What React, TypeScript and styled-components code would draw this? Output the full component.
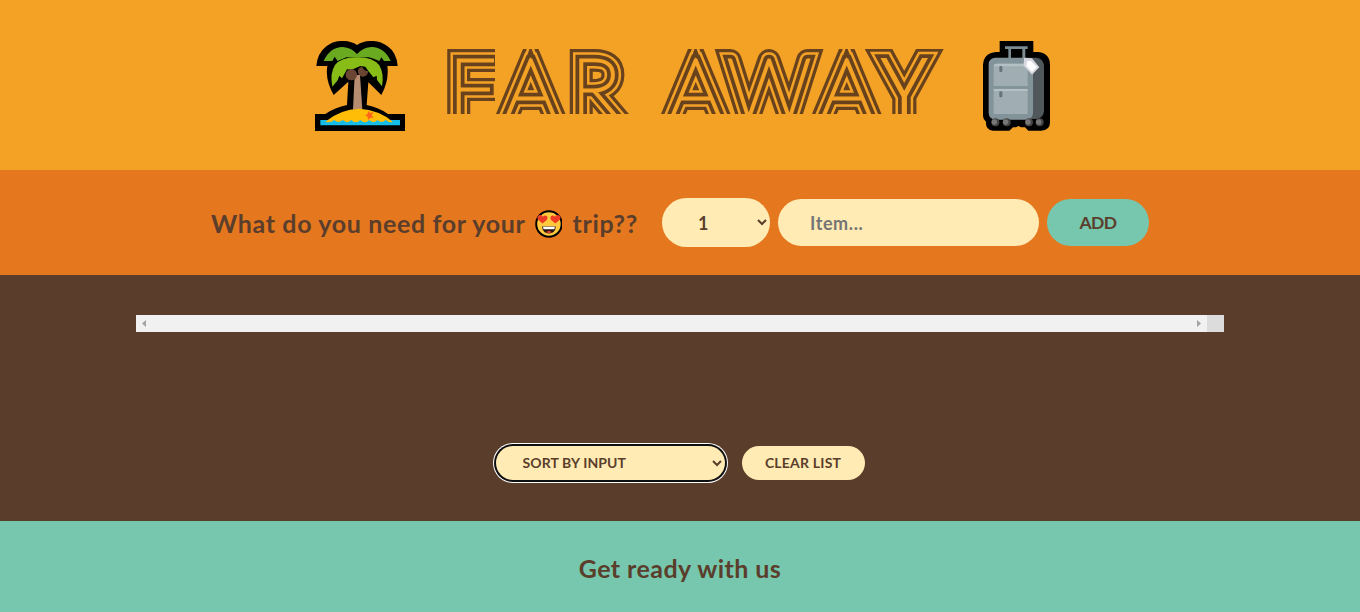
import React from "react";
import styled, { createGlobalStyle } from "styled-components";

const GlobalStyle = createGlobalStyle`
  * { box-sizing: border-box; margin: 0; padding: 0; }
  body { margin: 0; color: #5a3e2b; font-family: Lato, "Open Sans", sans-serif; font-weight: 700; overflow: hidden; }
  select, input, button { font-family: inherit; font-weight: 700; color: #5a3e2b; border: none; border-radius: 100px; }
`;

const Page = styled.div`
  display: grid;
  grid-template-rows: 170px 105px 246px 91px;
  height: 612px;
`;

const Header = styled.header`
  display: flex;
  justify-content: center;
  align-items: flex-start;
  padding: 40px 0 0 6px;
  background: #f4a226;
`;

const Palm = styled.svg`
  width: 90px;
  height: 90px;
  margin-top: 1px;
`;

const Wordmark = styled.svg`
  width: 510px;
  height: 110px;
  margin: 0 32px 0 35px;
  overflow: visible;
  font-family: Lato, sans-serif;
  font-weight: 100;
  font-size: 84px;
`;

const Suitcase = styled.svg`
  width: 70px;
  height: 91px;
`;

const AddForm = styled.form`
  display: flex;
  justify-content: center;
  align-items: center;
  gap: 8px;
  background: #e5771f;
`;

const Question = styled.h3`
  display: flex;
  align-items: center;
  width: 427px;
  margin-right: 16px;
  padding-top: 3px;
  font-size: 25px;
  line-height: 28px;
  white-space: pre;
`;

const Phrase = styled.span<{ $spacing: number }>`
  padding-bottom: 2px;
  letter-spacing: ${(p) => p.$spacing}px;
`;

const Face = styled.svg`
  width: 28px;
  height: 28px;
  margin: 0 10px 0 9px;
`;

const Quantity = styled.select`
  width: 108px;
  height: 49px;
  padding: 12px 32px;
  background: #ffebb3;
  font-size: 18px;
`;

const ItemInput = styled.input`
  width: 261px;
  height: 47px;
  padding: 12px 32px;
  background: #ffebb3;
  font-size: 18px;
  letter-spacing: 0.6px;
  &::placeholder { color: #757575; }
`;

const AddButton = styled.button`
  width: 102px;
  height: 47px;
  background: #76c7ad;
  font-size: 17.5px;
  letter-spacing: -0.6px;
`;

const ListPanel = styled.main`
  display: flex;
  flex-direction: column;
  justify-content: space-between;
  align-items: center;
  padding: 40px 0 41px;
  background: #5a3e2b;
`;

const ScrollBar = styled.div`
  display: flex;
  width: 80%;
  height: 17px;
  background: #f1f1f1;
`;

const ScrollTrack = styled.div`
  display: flex;
  flex: 1;
  align-items: center;
  justify-content: space-between;
  padding: 0 6px;
`;

const ScrollCorner = styled.div`
  width: 17px;
  background: #dcdcdc;
`;

const Arrow = styled.svg`
  width: 4px;
  height: 7px;
  fill: #a3a3a3;
`;

const Actions = styled.div`
  display: flex;
  gap: 17px;
`;

const SortSelect = styled.select`
  width: 229px;
  height: 34px;
  padding: 7px 23px 9px;
  background: #ffebb3;
  font-size: 14px;
  letter-spacing: 0.1px;
  outline: none;
  box-shadow: 0 0 0 2px #101010, 0 0 0 3px #fff;
`;

const ClearButton = styled.button`
  width: 123px;
  height: 34px;
  padding-bottom: 2px;
  background: #ffebb3;
  font-size: 14px;
  letter-spacing: 0.2px;
`;

const Footer = styled.footer`
  display: flex;
  justify-content: center;
  align-items: center;
  padding-top: 4px;
  background: #76c7ad;
  font-size: 25px;
`;

const PalmIcon = () => (
  <Palm viewBox="45 33 270 270" aria-hidden="true">
    <path d="M49 108Q52 70 79 49Q102 31 132 33Q155 34 171 45Q188 34 208 33Q239 31 263 49Q290 68 293 108H262Q268 151 244 195L205 157L200 225Q236 232 264 252H315V303H45V252H76Q105 232 141 225L145 155L101 195Q75 150 82 108Z" fill="#000" />
    <path d="M71 93Q91 50 129 51Q154 53 171 72Q191 51 215 51Q254 53 272 93H252L244 82L238 93Q220 86 207 82H139L113 93L104 80L97 93Z" fill="#69aa20" />
    <path d="M97 170Q89 130 105 105Q125 81 170 82Q217 80 238 106Q253 132 246 169L231 150L230 137L220 142L205 123L196 110L181 108L155 119L141 118L126 145L118 137L113 151Z" fill="#87bd16" />
    <path d="M164 135H180L187 239H159Z" fill="#b58c70" />
    <circle cx="154" cy="134" r="17" fill="#694532" />
    <path d="M174 120Q178 109 187 111Q189 121 205 124Q201 142 186 140Q172 135 174 120Z" fill="#694532" />
    <path d="M61 270H300V286H61Z" fill="#16bde8" />
    <path d="M76 275Q120 238 178 236Q238 240 278 275Q267 280 258 269Q244 283 233 270Q220 283 208 270Q194 284 181 270Q166 284 154 270Q142 283 128 270Q115 282 103 270Q90 280 76 275Z" fill="#ffbd08" />
    <path d="M204 242L210 249L220 246L215 256L221 264L211 263L204 270L203 260L195 256L203 252Z" fill="#ff661b" />
  </Palm>
);

const SuitcaseIcon = () => (
  <Suitcase viewBox="66 30 210 273" aria-hidden="true">
    <path d="M119 33H220V66H235Q270 70 270 105V270Q273 302 243 302H205L195 292H183L175 288L168 292H159L148 302H99Q76 300 78 275Q69 268 69 258V105Q71 69 108 66H119Z" fill="#000" />
    <path d="M185 83H230Q252 87 252 111V244Q251 263 230 267H190Z" fill="#50585b" />
    <path d="M135 49H203V57H196V84H187V57H153V84H145V57H135Z" fill="#7b8b91" />
    <rect x="86" y="83" width="133" height="186" rx="20" fill="#82949a" />
    <path d="M101 109Q101 101 110 101H194Q203 101 203 110V168H101ZM101 183H203V252H101Z" fill="#a0adb2" />
    <path d="M101 109Q101 101 110 101H194Q203 101 203 109ZM101 176H203V183H101Z" fill="#b4c0c4" />
    <path d="M101 169H203V176H101Z" fill="#82949a" />
    <rect x="118" y="108" width="9" height="18" rx="3" fill="#65747a" />
    <rect x="118" y="184" width="9" height="18" rx="3" fill="#65747a" />
    <path d="M192 84L216 85L238 112L216 134L191 107Z" fill="#d7d7df" />
    <path d="M202 93L213 93L231 111L216 126L199 108Z" fill="#fff" />
    {[106, 140, 207, 239].map((x) => (
      <g key={x}>
        <circle cx={x} cy="277" r="12" fill="#454545" />
        <circle cx={x - 3} cy="276" r="8" fill="#777" />
      </g>
    ))}
  </Suitcase>
);

const FaceIcon = () => (
  <Face viewBox="0 0 28 28" aria-hidden="true">
    <circle cx="14" cy="14" r="12.8" fill="#ffc83d" stroke="#000" strokeWidth="2" />
    <path d="M7.5 13.5L2.6 9.2Q1.9 5.4 5 5Q7 4.6 8 6.6Q10 4.7 12 6.3Q13.5 8.5 11.8 10ZM20.5 13.5L16.2 10Q14.5 8.5 16 6.3Q18 4.7 20 6.6Q21 4.6 23 5Q26.1 5.4 25.4 9.2Z" fill="#ed3b24" />
    <path d="M7 16.5H21Q20 23.5 14 23.5Q8 23.5 7 16.5Z" fill="#251411" />
    <path d="M8 16.8H20L19.4 19.3H8.6Z" fill="#fff" />
    <path d="M11 22.3Q14 19.8 17 22.3Q14 23.7 11 22.3Z" fill="#e3452e" />
  </Face>
);

const bands = [
  { width: 15.5, color: "#f4a226" },
  { width: 10.5, color: "#68421c" },
  { width: 3, color: "#f4a226" },
];

const Title = () => (
  <Wordmark viewBox="440 40 510 110" role="heading" aria-level={1}>
    <g strokeLinejoin="miter">
      <g stroke="#68421c" strokeWidth="22" fill="none">
        <text id="name" y="119" x="448.5 504 571 620 669 727 820">
          FAR AWA<tspan x="883" fontFamily="Noto Sans" fontSize="84">Y</tspan>
        </text>
      </g>
      {bands.map((b) => (
        <use key={b.width} href="#name" stroke={b.color} strokeWidth={b.width} fill={b.width === 3 ? b.color : "none"} />
      ))}
    </g>
    <path d="M440 10H955V49H440ZM440 114H955V145H440ZM495 45H517L502 96L499 106H495Z" fill="#f4a226" />
  </Wordmark>
);

export default function App() {
  return (
    <>
      <GlobalStyle />
      <Page>
        <Header>
          <PalmIcon />
          <Title />
          <SuitcaseIcon />
        </Header>
        <AddForm onSubmit={(e) => e.preventDefault()}>
          <Question>
            <Phrase $spacing={0.65}>What do you need for your</Phrase>
            <FaceIcon />
            <Phrase $spacing={0.7}>trip??</Phrase>
          </Question>
          <Quantity defaultValue="1">
            {Array.from({ length: 20 }, (_, i) => (
              <option key={i} value={i + 1}>{i + 1}</option>
            ))}
          </Quantity>
          <ItemInput type="text" placeholder="Item..." />
          <AddButton>ADD</AddButton>
        </AddForm>
        <ListPanel>
          <ScrollBar>
            <ScrollTrack>
              <Arrow viewBox="0 0 4 7"><path d="M4 0V7L0 3.5Z" /></Arrow>
              <Arrow viewBox="0 0 4 7"><path d="M0 0V7L4 3.5Z" /></Arrow>
            </ScrollTrack>
            <ScrollCorner />
          </ScrollBar>
          <Actions>
            <SortSelect defaultValue="input">
              <option value="input">SORT BY INPUT</option>
              <option value="description">SORT BY DESCRIPTION</option>
              <option value="packed">SORT BY PACKED STATUS</option>
            </SortSelect>
            <ClearButton>CLEAR LIST</ClearButton>
          </Actions>
        </ListPanel>
        <Footer>
          <Phrase $spacing={0.45}>Get ready with us</Phrase>
        </Footer>
      </Page>
    </>
  );
}
